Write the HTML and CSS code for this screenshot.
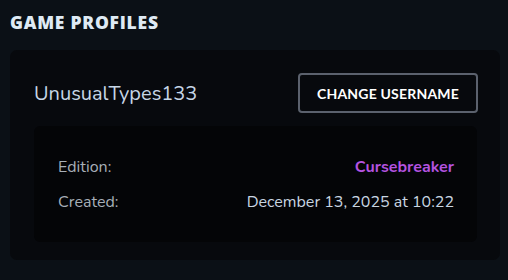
FILE: index.html
```html
<!DOCTYPE html>
<html>
<head>
<meta charset="utf-8">
<link rel="stylesheet" href="styles.css">
</head>
<body>
<section class="section">
  <h2 class="title">GAME PROFILES</h2>
  <div class="card">
    <div class="card-head">
      <span class="username">UnusualTypes133</span>
      <button class="btn">CHANGE USERNAME</button>
    </div>
    <div class="details">
      <div class="row"><span class="label">Edition:</span><span class="edition">Cursebreaker</span></div>
      <div class="row"><span class="label">Created:</span><span class="value">December 13, 2025 at 10:22</span></div>
    </div>
  </div>
</section>
</body>
</html>
```
FILE: styles.css
```css
html, body {
  margin: 0;
  padding: 0;
  background: #0b1016;
  width: 508px;
  height: 280px;
  overflow: hidden;
}
.section {
  padding: 10px 8px 0 10px;
  font-family: "Nunito", "Lato", "Open Sans", sans-serif;
}
.title {
  margin: 0 0 15px 0;
  font-family: "Open Sans", sans-serif;
  font-weight: 800;
  font-size: 17.5px;
  letter-spacing: 0.75px;
  line-height: 25px;
  color: #dfeaf4;
}
.card {
  background: #07090d;
  border-radius: 7px;
  padding: 23px 23px 18px 24px;
  height: 169px;
  box-sizing: content-box;
  width: 443px;
}
.card-head {
  display: flex;
  align-items: center;
  justify-content: space-between;
  height: 40px;
}
.username {
  font-size: 20px;
  color: #c6d6e6;
  font-weight: 400;
}
.btn {
  background: transparent;
  border: 2px solid #5b616d;
  border-radius: 4px;
  color: #ffffff;
  font-family: "Lato", sans-serif;
  font-weight: 700;
  font-size: 14px;
  height: 40px;
  width: 180px;
  padding: 0;
  margin-right: -1px;
  letter-spacing: 0.2px;
}
.details {
  margin-top: 13px;
  background: #040507;
  border-radius: 6px;
  padding: 29px 23px 18px 24px;
  height: 69px;
  display: flex;
  flex-direction: column;
  gap: 12px;
}
.row {
  display: flex;
  justify-content: space-between;
  align-items: center;
  height: 23px;
  font-size: 16px;
}
.label {
  color: #a7afb7;
}
.edition {
  color: #b553e0;
  font-weight: 700;
}
.value {
  color: #c9d6e2;
}
```
